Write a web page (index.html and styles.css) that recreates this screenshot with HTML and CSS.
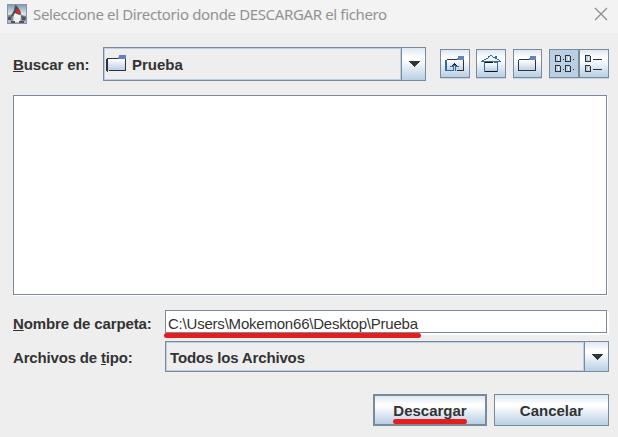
FILE: index.html
```html
<!DOCTYPE html>
<html lang="es">
<head>
<meta charset="utf-8">
<title>Seleccione el Directorio donde DESCARGAR el fichero</title>
<link rel="stylesheet" href="styles.css">
</head>
<body>
<div class="dialog">
  <header class="titlebar">
    <svg class="app-icon" width="20" height="20" viewBox="0 0 20 20">
      <defs><linearGradient id="sky" x1="0" y1="0" x2="0" y2="1"><stop offset="0" stop-color="#7e98b3"/><stop offset=".5" stop-color="#dfe5ea"/><stop offset="1" stop-color="#a3b3c3"/></linearGradient></defs>
      <rect x=".5" y=".5" width="19" height="19" fill="url(#sky)" stroke="#8396aa"/>
      <path d="M3 17L5 13L1 14L1 11L6 10L9 6L13 9L15 11L19 12L19 16L15 15L17 18Z" fill="#8c9297"/>
      <path d="M7 10L10 7L13 10L14 13L13 18L6 18Z" fill="#eef0f2"/>
      <path d="M8 1L10 2L12 5L14 9L13 11L10 10L8 9L6 12L4 12L7 6Z" fill="#4b5056"/>
      <path d="M1 13L5 12L4 16L1 16ZM14 12L19 13L18 17L15 16ZM4 17H8V19H4ZM12 17H17V19H12Z" fill="#50565c"/>
      <circle cx="11" cy="7.500" r="2.300" fill="#d9282b"/>
    </svg>
    <h1 class="title">Seleccione el Directorio donde DESCARGAR el fichero</h1>
    <svg class="close" width="14" height="14" viewBox="0 0 14 14"><path d="M1 1L13 13M13 1L1 13" stroke="#8c8c8c" stroke-width="1.2" fill="none"/></svg>
  </header>

  <div class="row lookup">
    <label class="label"><u>B</u>uscar en:</label>
    <div class="combo combo-dir">
      <div class="combo-value">
        <svg class="folder" width="20" height="17" viewBox="0 0 20 17" shape-rendering="crispEdges">
          <defs><linearGradient id="fold" x1="0" y1="0" x2="0" y2="1"><stop offset="0" stop-color="#fff"/><stop offset="1" stop-color="#b8cfe5"/></linearGradient></defs>
          <rect x="2" y="4" width="17" height="11" fill="url(#fold)"/>
          <path d="M0 4H1V16H0ZM1 3H2V17H1ZM2 3H12V4H2ZM19 4H20V16H19ZM3 15H20V16H3Z" fill="#333"/>
          <path d="M13 0H20V4H12V2H13Z" fill="#6382bf"/>
        </svg>
        <span>Prueba</span>
      </div>
      <div class="combo-arrow"><svg width="12" height="6" viewBox="0 0 12 6" shape-rendering="crispEdges"><path d="M0 0H12L6 6Z" fill="#333"/></svg></div>
    </div>
    <div class="tools">
      <button class="tool">
        <svg width="20" height="17" viewBox="0 0 20 17" shape-rendering="crispEdges">
          <rect x="2" y="4" width="16" height="11" fill="url(#fold)"/>
          <path d="M0 4H2V15H0ZM2 14H8V15H2Z" fill="#36699c"/>
          <path d="M2 3H12V4H2ZM18 4H19V15H18ZM12 14H18V15H12Z" fill="#333"/>
          <path d="M13 0H19V4H12V2H13Z" fill="#6382bf"/>
          <path d="M9 7H10V8H11V9H12V10H14V11H11V15H10V10H9V15H8V11H5V10H7V9H8V8H9Z" fill="#36699c"/>
          <path d="M9 7H10V8H11V9H12V10H11V9H8V10H7V9H8V8H9Z" fill="#222"/>
        </svg>
      </button>
      <button class="tool tool-home">
        <svg width="20" height="18" viewBox="0 0 20 18" shape-rendering="crispEdges">
          <path d="M4 8H16V16H4Z" fill="url(#fold)"/>
          <path d="M2 5H5V4H7V2H9V1H11V2H13V3H15V4H17V5H18V6H2Z" fill="#edf3f9"/>
          <path d="M9 0H11V1H9ZM7 1H9V2H7ZM11 1H12V2H11ZM5 3H7V4H5ZM7 2H8V3H7ZM12 2H14V3H12ZM14 1H16V4H14ZM3 4H5V5H3ZM16 4H18V5H16ZM1 5H3V6H1ZM18 5H19V6H18ZM0 6H20V7H0ZM3 7H4V17H3ZM16 7H17V17H16ZM13 7H16V8H13Z" fill="#36699c"/>
          <path d="M4 7H12V8H4ZM4 16H16V17H4Z" fill="#111"/>
        </svg>
      </button>
      <button class="tool tool-new">
        <svg width="19" height="17" viewBox="0 0 19 17" shape-rendering="crispEdges">
          <rect x="1" y="4" width="17" height="11" fill="url(#fold)"/>
          <path d="M0 4H1V15H0ZM1 3H12V4H1ZM17 4H18V15H17ZM1 14H18V15H1Z" fill="#333"/>
          <path d="M12 0H18V4H11V2H12Z" fill="#6382bf"/>
        </svg>
      </button>
      <div class="views">
        <button class="tool tool-view pressed">
          <svg width="20" height="17" viewBox="0 0 20 17" shape-rendering="crispEdges">
            <path d="M.5 .5H4.500L5.500 1.500V6.500H.5ZM10.500 .5H14.500L15.500 1.500V6.500H10.500ZM.5 10.500H4.500L5.500 11.500V16.500H.5ZM10.500 10.500H14.500L15.500 11.500V16.500H10.500Z" fill="#b8cfe5" stroke="#333"/>
            <path d="M3 2H4V5H3ZM13 2H14V5H13ZM3 12H4V15H3ZM13 12H14V15H13Z" fill="#fff"/>
            <path d="M8 4H9V5H8ZM18 4H19V5H18ZM8 14H9V15H8ZM18 14H19V15H18Z" fill="#333"/>
          </svg>
        </button>
        <button class="tool tool-view">
          <svg width="20" height="17" viewBox="0 0 20 17" shape-rendering="crispEdges">
            <path d="M.5 .5H4.500L5.500 1.500V6.500H.5ZM.5 10.500H4.500L5.500 11.500V16.500H.5Z" fill="#b8cfe5" stroke="#333"/>
            <path d="M3 2H4V5H3ZM3 12H4V15H3Z" fill="#fff"/>
            <path d="M8 4H17V5H8ZM8 14H17V15H8Z" fill="#333"/>
          </svg>
        </button>
      </div>
    </div>
  </div>

  <div class="list"></div>

  <div class="row name-row">
    <label class="label wide-label"><u>N</u>ombre de carpeta:</label>
    <div class="field"><span class="path">C:\Users\Mokemon66\Desktop\Prueba</span><i class="marker marker-path"></i></div>
  </div>

  <div class="row type-row">
    <label class="label wide-label type-label">Archivos de <u>t</u>ipo:</label>
    <div class="combo combo-type">
      <div class="combo-value"><span class="type-text">Todos los Archivos</span></div>
      <div class="combo-arrow"><svg width="12" height="6" viewBox="0 0 12 6" shape-rendering="crispEdges"><path d="M0 0H12L6 6Z" fill="#333"/></svg></div>
    </div>
  </div>

  <footer class="actions">
    <button class="btn btn-default"><span>Descargar</span><i class="marker marker-btn"></i></button>
    <button class="btn"><span>Cancelar</span></button>
  </footer>
</div>
</body>
</html>
```
FILE: styles.css
```css
* { box-sizing: border-box; }
body {
  margin: 0;
  background: #eeeeee;
  color: #333;
  font: bold 15px/18px "Liberation Sans", Arial, sans-serif;
}
.dialog { width: 618px; height: 437px; overflow: hidden; }
button { font: inherit; color: inherit; margin: 0; padding: 0; border-radius: 0; }
svg { display: block; flex: none; }
u { text-decoration: underline; text-decoration-thickness: 1px; text-underline-offset: 1px; text-decoration-skip-ink: none; }

.titlebar {
  display: flex;
  align-items: flex-start;
  height: 33px;
  padding: 4px 10px 0 7px;
  background: #f3f3f3;
}
.title {
  flex: 1;
  margin: 0 0 0 6px;
  font: 400 15px/21px "Noto Sans", "Open Sans", sans-serif;
  letter-spacing: -0.36px;
  color: #929292;
  white-space: nowrap;
}
.close { margin-top: 3px; }

.row { display: flex; padding-left: 13px; }
.label { white-space: nowrap; letter-spacing: -0.12px; }
.lookup { margin-top: 14px; height: 34px; }
.lookup .label { width: 90px; padding-top: 9px; }

.combo { display: flex; border: 1px solid #7a8a99; }
.combo-value {
  flex: 1;
  display: flex;
  align-items: center;
  border: 1px solid #b8cfe5;
}
.combo-value span { padding-top: 2px; }
.combo-arrow {
  display: flex;
  align-items: center;
  justify-content: center;
  width: 24px;
  border-left: 1px solid #7a8a99;
  background: linear-gradient(#dde8f3, #fff 30%, #fff 35%, #b8cfe5);
}
.combo-dir { width: 323px; height: 34px; }
.combo-dir .folder { margin-left: 1px; margin-top: -1px; }
.combo-dir span { margin-left: 6px; }

.tools { display: flex; margin: 2px 0 0 14px; }
.tool {
  display: flex;
  justify-content: center;
  width: 30px;
  height: 29px;
  margin-right: 6px;
  padding-top: 6px;
  border: 1px solid #7a8a99;
  background: linear-gradient(#dde8f3, #fff 30%, #fff 35%, #b8cfe5);
  box-shadow: 0 1px #c9d7e5;
}
.tool-home { padding-top: 5px; }
.tool-new { width: 29px; margin: 0 7px 0 1px; }
.views { display: flex; }
.tool-view { margin: 0; padding: 5px 0 0 5px; justify-content: flex-start; }
.pressed { background: #b8cfe5; }

.list {
  width: 594px;
  height: 200px;
  margin: 14px 0 0 13px;
  border: 1px solid #7a8a99;
  background: #fff;
  box-shadow: 1px 1px #fff;
}

.wide-label { width: 152px; padding-top: 5px; }
.name-row { margin-top: 15px; height: 25px; }
.field {
  position: relative;
  width: 442px;
  height: 23px;
  padding: 4px 0 0 2px;
  border: 1px solid #7a8a99;
  background: #fff;
  box-shadow: 1px 1px #fff, 2px 2px #fff;
  font-weight: 400;
  letter-spacing: -0.21px;
}
.marker { position: absolute; height: 5px; border-radius: 3px; background: #e81c1c; }
.marker-path { left: -2px; top: 22px; width: 257px; }

.type-row { margin-top: 6px; height: 31px; }
.type-label { padding-top: 8px; letter-spacing: -0.17px; }
.combo-type { width: 444px; height: 31px; }
.type-text { margin-left: 3px; letter-spacing: -0.15px; }

.actions { display: flex; gap: 7px; margin: 22px 0 0 373px; }
.btn {
  position: relative;
  width: 115px;
  height: 32px;
  padding-top: 2px;
  border: 1px solid #7a8a99;
  background: linear-gradient(#dde8f3, #fff 30%, #fff 35%, #b8cfe5);
}
.btn-default { width: 114px; border-width: 2px; }
.marker-btn { left: 18px; top: 23px; width: 74px; }
```
